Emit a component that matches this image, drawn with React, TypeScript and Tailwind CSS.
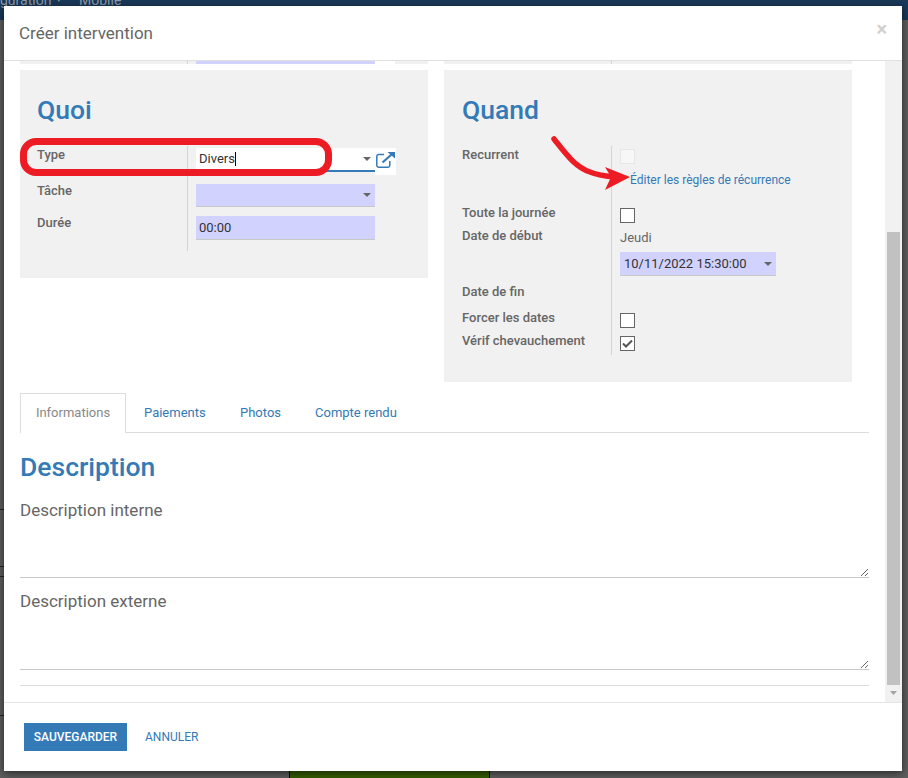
import React from 'react';

const Caret = () => (
    <svg width="8" height="4" viewBox="0 0 8 4" className="shrink-0">
        <path d="M0 0h8L4 4z" fill="#666666" />
    </svg>
);

const Row = ({ label, h, narrow, children }: { label: string; h: string; narrow?: boolean; children?: React.ReactNode }) => (
    <div className={`flex ${h}`}>
        <div className={`${narrow ? 'w-[150px]' : 'w-[151px]'} shrink-0 border-r border-[#d4d4d4] text-[13px] leading-[18px] font-medium text-[#666666]`}>
            {label}
        </div>
        <div className="flex-1 pl-[8px]">{children}</div>
    </div>
);

const Checkbox = ({ checked, disabled, mt }: { checked?: boolean; disabled?: boolean; mt: string }) => (
    <div className={`${mt} w-[15px] h-[15px] flex items-center justify-center border ${disabled ? 'border-[#e6e6e6] bg-[#f7f7f7]' : 'border-[#666666] bg-white'}`}>
        {checked && (
            <svg width="11" height="9" viewBox="0 0 11 9">
                <path d="M1 4.5l3 3 6-6" fill="none" stroke="#555555" strokeWidth="2" />
            </svg>
        )}
    </div>
);

const NoteField = ({ label, h }: { label: string; h: string }) => (
    <div>
        <div className="h-[22px] text-[17px] leading-[22px] text-[#666666]">{label}</div>
        <textarea className={`block w-full ${h} border-b border-[#c8c8c8] outline-none bg-white`} />
    </div>
);

export default function App() {
    return (
        <div className="relative w-[908px] h-[778px] overflow-hidden bg-[#5e5e5e] font-['Roboto',sans-serif]">
            {/* Page behind the dialog */}
            <div className="flex flex-col h-full">
                <div className="h-[20px] bg-[#1a3858] overflow-hidden">
                    <div className="flex items-center -mt-[9px] text-[14px] leading-[18px] text-[#8d9cab]">
                        <span className="w-[57px]">guration</span>
                        <span className="w-[22px] text-[7px]">▾</span>
                        <span>Mobile</span>
                    </div>
                </div>
                <div className="flex-1">
                    <div className="mt-[489px] w-[4px] h-px bg-[#222222]" />
                    <div className="mt-[56px] w-[4px] h-px bg-[#222222]" />
                    <div className="mt-[9px] w-[4px] h-px bg-[#222222]" />
                    <div className="mt-[138px] w-[4px] h-px bg-[#222222]" />
                </div>
                <div className="pl-[289px]">
                    <div className="w-[201px] h-[7px] bg-[#355e00] border-x border-black" />
                </div>
            </div>

            {/* Dialog */}
            <div className="absolute left-[4px] top-[6px] w-[898px] h-[765px] flex flex-col bg-white shadow-[0_2px_8px_rgba(0,0,0,0.6)]">
                <div className="h-[55px] shrink-0 flex items-center justify-between pl-[15px] pr-[15px] border-b border-[#e0e0e0]">
                    <h4 className="pt-[2px] text-[17px] text-[#666666]">Créer intervention</h4>
                    <span className="text-[20px] font-bold leading-none text-[#cfcfcf] -mt-[9px]">×</span>
                </div>

                <div className="flex flex-1 min-h-0">
                    <div className="flex-1 min-w-0 overflow-hidden pl-[16px] pr-[16px]">
                        <div className="flex gap-[16px] h-[3px] overflow-hidden">
                            <div className="w-[408px] bg-[#f1f1f1] flex">
                                <div className="w-[168px] border-r border-[#d4d4d4]" />
                                <div className="ml-[8px] w-[179px] bg-[#d2d2ff]" />
                                <div className="w-[20px] bg-white" />
                            </div>
                            <div className="w-[408px] bg-[#f1f1f1]">
                                <div className="w-[168px] h-full border-r border-[#d4d4d4]" />
                            </div>
                        </div>

                        <div className="flex items-start gap-[16px] mt-[6px]">
                            {/* Quoi */}
                            <div className="w-[408px] bg-[#f1f1f1] pl-[17px] pb-[27px]">
                                <h2 className="pt-[24px] pb-[20px] text-[26.5px] font-medium leading-[32px] text-[#337ab7]">Quoi</h2>
                                <Row label="Type" h="h-[36px]">
                                    <div className="flex items-start">
                                        <div className="mt-[2px] w-[179px] h-[24px] bg-white border-b-2 border-[#337ab7] flex items-center justify-between pl-[3px] pr-[4px] text-[13px] text-[#333333]">
                                            <span className="flex items-center">Divers<span className="inline-block w-px h-[14px] bg-black" /></span>
                                            <Caret />
                                        </div>
                                        <div className="mt-[2px] w-[21px] h-[27px] bg-white pt-[4px] pl-[1px]">
                                            <svg width="19" height="16" viewBox="0 0 19 16" fill="none" stroke="#337ab7" strokeWidth="1.5">
                                                <path d="M8 2.5H2.5A1.8 1.8 0 0 0 .8 4.3v9.2a1.8 1.8 0 0 0 1.7 1.7h9.6a1.8 1.8 0 0 0 1.7-1.7V9" />
                                                <path d="M6.5 10.5L15.5 2.5" strokeWidth="2.2" />
                                                <path d="M11.5 0H19v6.5z" fill="#337ab7" stroke="none" />
                                            </svg>
                                        </div>
                                    </div>
                                </Row>
                                <Row label="Tâche" h="h-[32px]">
                                    <div className="mt-[2px] w-[179px] h-[23px] bg-[#d2d2ff] border-b border-[#c8c8c8] flex items-center justify-end pr-[4px]">
                                        <Caret />
                                    </div>
                                </Row>
                                <Row label="Durée" h="h-[37px]">
                                    <div className="mt-[2px] w-[179px] h-[24px] bg-[#d2d2ff] border-b border-[#c8c8c8] flex items-center pl-[3px] text-[13px] text-[#333333]">00:00</div>
                                </Row>
                            </div>

                            {/* Quand */}
                            <div className="w-[408px] bg-[#f1f1f1] pl-[18px] pb-[27px]">
                                <h2 className="pt-[24px] pb-[20px] text-[26.5px] font-medium leading-[32px] text-[#337ab7]">Quand</h2>
                                <Row narrow label="Recurrent" h="h-[58px]">
                                    <Checkbox disabled mt="mt-[3px]" />
                                    <div className="mt-[7px] pl-[10px] text-[12px] leading-[18px] text-[#337ab7] whitespace-nowrap">Éditer les règles de récurrence</div>
                                </Row>
                                <Row narrow label="Toute la journée" h="h-[23px]">
                                    <Checkbox mt="mt-[4px]" />
                                </Row>
                                <Row narrow label="Date de début" h="h-[56px]">
                                    <div className="mt-[1px] text-[13px] leading-[20px] text-[#666666]">Jeudi</div>
                                    <div className="mt-[4px] w-[156px] h-[24px] bg-[#d2d2ff] border-b border-[#c8c8c8] flex items-center justify-between pl-[4px] pr-[4px] text-[13px] text-[#333333]">
                                        <span>10/11/2022 15:30:00</span>
                                        <Caret />
                                    </div>
                                </Row>
                                <Row narrow label="Date de fin" h="h-[26px]" />
                                <Row narrow label="Forcer les dates" h="h-[23px]">
                                    <Checkbox mt="mt-[4px]" />
                                </Row>
                                <Row narrow label="Vérif chevauchement" h="h-[23px]">
                                    <Checkbox checked mt="mt-[4px]" />
                                </Row>
                            </div>
                        </div>

                        {/* Tabs */}
                        <div className="mt-[11px] flex h-[40px] border-b border-[#dddddd] text-[13px]">
                            <div className="w-[106px] h-[40px] pb-[2px] bg-white border border-b-0 border-[#dddddd] flex items-center justify-center text-[#888888]">Informations</div>
                            <div className="ml-[18px] w-[96px] leading-[39px] text-[#337ab7]">Paiements</div>
                            <div className="w-[75px] leading-[39px] text-[#337ab7]">Photos</div>
                            <div className="leading-[39px] text-[#337ab7]">Compte rendu</div>
                        </div>

                        <h2 className="mt-[17px] mb-[15px] text-[26.5px] leading-[34px] font-medium text-[#337ab7]">Description</h2>
                        <NoteField label="Description interne" h="h-[57px]" />
                        <div className="mt-[12px]">
                            <NoteField label="Description externe" h="h-[58px]" />
                        </div>
                        <div className="mt-[15px] border-b border-[#dddddd]" />
                    </div>

                    {/* Scrollbar */}
                    <div className="w-[17px] shrink-0 bg-[#f1f1f1] flex flex-col items-center pt-[171px]">
                        <div className="w-[13px] h-[453px] bg-[#c1c1c1]" />
                        <svg width="7" height="4" viewBox="0 0 7 4" className="mt-[6px]">
                            <path d="M0 0h7L3.5 4z" fill="#a3a3a3" />
                        </svg>
                    </div>
                </div>

                <div className="h-[69px] shrink-0 border-t border-[#e5e5e5] flex items-start pt-[20px] pl-[20px] gap-[18px]">
                    <div className="w-[103px] h-[28px] bg-[#337ab7] flex items-center justify-center text-[12px] font-medium text-white">SAUVEGARDER</div>
                    <div className="h-[28px] flex items-center text-[12px] text-[#337ab7]">ANNULER</div>
                </div>

                {/* Annotation: red outline */}
                <div className="absolute left-[16px] top-[132px] w-[312px] h-[38px] border-[7px] border-[#ed1c24] rounded-[16px]" />

                {/* Annotation: red arrow */}
                <svg className="absolute left-[537px] top-[118px]" width="94" height="74" viewBox="541 124 94 74">
                    <path d="M554 139C566 154 575 167 590 172C597 175 605 176 614 177" fill="none" stroke="#ed1c24" strokeWidth="5.5" strokeLinecap="round" />
                    <path d="M630 177L605 167L611 177L605 190z" fill="#ed1c24" />
                </svg>
            </div>
        </div>
    );
}
